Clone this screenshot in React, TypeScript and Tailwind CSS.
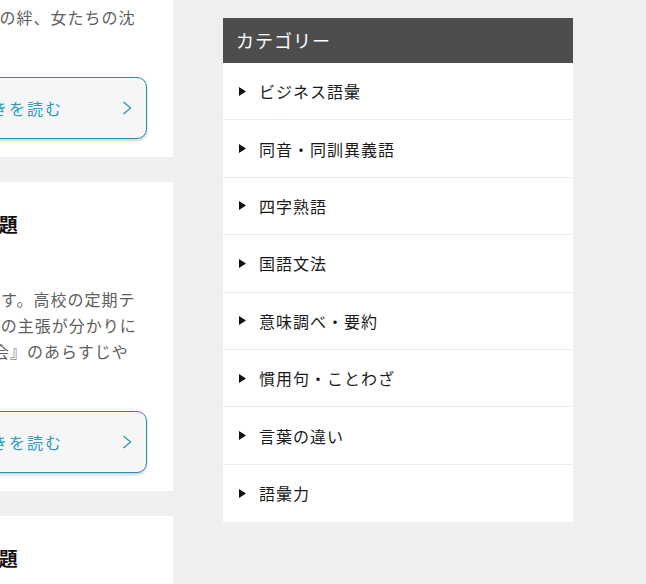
const FONT = "font-['Noto_Sans_CJK_JP','Noto_Sans',sans-serif]";

type Post = {
  title: string;
  lines: string[];
};

// Each excerpt line is 24 full-width chars; the article column runs off the left edge.
const POSTS: Post[] = [
  {
    title: "夏目漱石『こころ』の登場人物と主題",
    lines: [
      "夏目漱石『こころ』のあらすじを分かりやすく解説し",
      "ます。先生と友人の関係や、遺書に込められた想い、",
      "そして作品に描かれる明治の時代背景まで、読み解き",
      "ます。さらに作中で描かれる男たちの絆、女たちの沈",
    ],
  },
  {
    title: "芥川『舞踏会』のあらすじと主題",
    lines: [
      "芥川龍之介の短編を詳しく解説します。高校の定期テ",
      "ストでもよく出る作品ですが、作者の主張が分かりに",
      "くいと感じる人も多いため、『舞踏会』のあらすじや",
    ],
  },
  {
    title: "森鷗外『舞姫』のあらすじと主題",
    lines: [
      "森鷗外の代表作を詳しく解説します。高校の現代文で",
      "必ず扱われる作品ですが、文語体で書かれているため",
      "読みにくいと感じる人も多いので、『舞姫』の背景や",
    ],
  },
];

const CATEGORIES = [
  "ビジネス語彙",
  "同音・同訓異義語",
  "四字熟語",
  "国語文法",
  "意味調べ・要約",
  "慣用句・ことわざ",
  "言葉の違い",
  "語彙力",
];

function PostCard({ post }: { post: Post }) {
  return (
    <article className="bg-white px-[26px] pt-[28px] pb-[18px]">
      <h2 className="text-[19px] tracking-[0.3px] leading-[28px] font-bold text-[#111] whitespace-nowrap">
        {post.title}
      </h2>
      <p className="mt-[48px] text-[16px] tracking-[1px] leading-[26px] text-[#5e5e5e] whitespace-nowrap">
        {post.lines.map((line, i) => (
          <span key={i} className="block">
            {line}
          </span>
        ))}
      </p>
      <a
        href="#"
        className="mt-[47px] flex h-[62px] items-center justify-end gap-[59px] rounded-[10px] border border-[#1e90b8] bg-[#f6f6f6] pr-[14px] shadow-[0_2px_3px_rgba(0,0,0,0.18)]"
      >
        <span className="text-[16px] tracking-[2px] text-[#2b9cc4]">続きを読む</span>
        <svg width="10" height="14" viewBox="0 0 10 14" fill="none">
          <polyline points="1.5,1 8.5,7 1.5,13" stroke="#2b96bd" strokeWidth="1.3" />
        </svg>
      </a>
    </article>
  );
}

export default function App() {
  return (
    <div className={`flex h-[584px] w-[646px] items-start overflow-hidden bg-[#efefef] ${FONT}`}>
      <main className="-mt-[178px] -ml-[297px] flex w-[470px] shrink-0 flex-col gap-[25px]">
        {POSTS.map((post) => (
          <PostCard key={post.title} post={post} />
        ))}
      </main>

      <aside className="ml-[50px] mt-[18px] w-[350px] shrink-0 bg-white">
        <h3 className="flex h-[45px] items-center bg-[#4d4d4d] pl-[13px] text-[18px] tracking-[1px] text-white">
          カテゴリー
        </h3>
        <ul>
          {CATEGORIES.map((cat) => (
            <li
              key={cat}
              className="flex h-[57.4px] items-center gap-[13px] border-b border-[#ebebeb] pl-[16px] last:border-b-0"
            >
              <svg width="7" height="9" viewBox="0 0 7 9">
                <polygon points="0,0 7,4.5 0,9" fill="#111" />
              </svg>
              <span className="text-[16px] tracking-[1px] text-[#1a1a1a]">{cat}</span>
            </li>
          ))}
        </ul>
      </aside>
    </div>
  );
}
